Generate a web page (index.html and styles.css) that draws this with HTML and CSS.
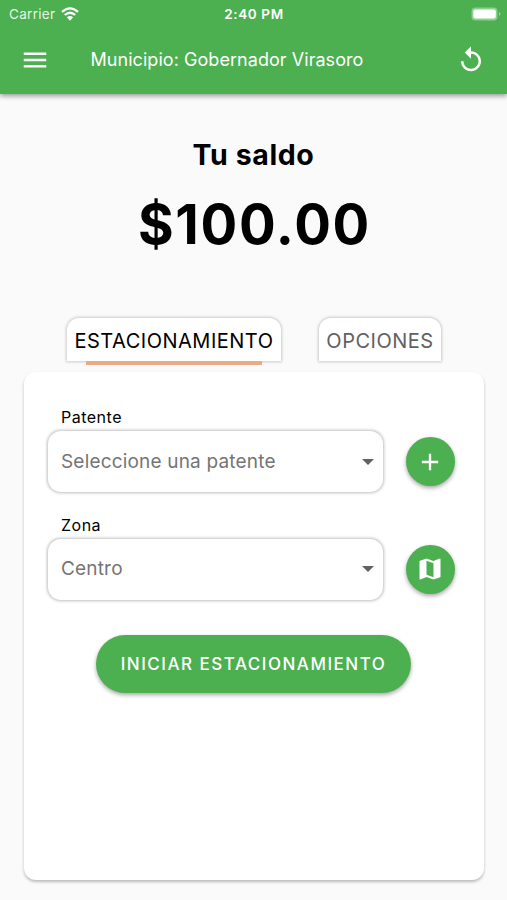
FILE: index.html
```html
<!DOCTYPE html>
<html lang="es">
<head>
<meta charset="utf-8">
<title>Estacionamiento</title>
<link rel="stylesheet" href="styles.css">
</head>
<body>
<header class="appbar">
  <div class="status">
    <div class="carrier"><span>Carrier</span>
      <svg class="wifi" viewBox="0 0 18 14"><path d="M1 4.9Q9-2.1 17 4.9M3.8 8Q9 3.500 14.200 8" fill="none" stroke="#fff" stroke-width="2.300"/><path d="M5.900 10.200Q9 7.700 12.100 10.200L9 13.700z" fill="#fff"/></svg>
    </div>
    <div class="clock">2:40 PM</div>
    <svg class="battery" viewBox="0 0 30 14"><rect x=".5" y=".5" width="26" height="13" rx="4" fill="#fff" fill-opacity=".38"/><rect x="2.300" y="2.500" width="22.500" height="9" rx="2" fill="#fff"/><path d="M28 5q3 2 0 4z" fill="#fff" fill-opacity=".45"/></svg>
  </div>
  <div class="toolbar">
    <svg class="icon" viewBox="0 0 24 24"><path d="M3 18h18v-2H3v2zm0-5h18v-2H3v2zm0-7v2h18V6H3z"/></svg>
    <h1 class="title">Municipio: Gobernador Virasoro</h1>
    <svg class="icon" viewBox="0 0 24 24"><path d="M12 5V1L7 6l5 5V7c3.310 0 6 2.690 6 6s-2.690 6-6 6-6-2.690-6-6H4c0 4.420 3.580 8 8 8s8-3.580 8-8-3.580-8-8-8z"/></svg>
  </div>
</header>

<section class="balance">
  <h2 class="balance-label">Tu saldo</h2>
  <div class="balance-amount">$100.00</div>
</section>

<nav class="tabs">
  <div class="tab tab-active">ESTACIONAMIENTO</div>
  <div class="tab">OPCIONES</div>
</nav>

<main class="card">
  <div class="label">Patente</div>
  <div class="row">
    <div class="select"><span>Seleccione una patente</span><i class="arrow"></i></div>
    <div class="fab"><svg class="fab-icon" viewBox="0 0 24 24"><path d="M19 13h-6v6h-2v-6H5v-2h6V5h2v6h6v2z"/></svg></div>
  </div>
  <div class="label">Zona</div>
  <div class="row">
    <div class="select"><span>Centro</span><i class="arrow"></i></div>
    <div class="fab"><svg class="fab-icon" viewBox="0 0 24 24"><path d="M20.500 3l-.16.030L15 5.100 9 3 3.360 4.900c-.21.070-.36.250-.36.480V20.500c0 .28.220.5.500.5l.16-.03L9 18.900l6 2.100 5.640-1.900c.21-.07.360-.25.360-.48V3.500c0-.28-.22-.5-.5-.5zM15 19l-6-2.110V5l6 2.110V19z"/></svg></div>
  </div>
  <div class="button">INICIAR ESTACIONAMIENTO</div>
</main>
</body>
</html>
```
FILE: styles.css
```css
body {
  margin: 0;
  height: 900px;
  overflow: hidden;
  background: #fafafa;
  color: #000;
  font-family: Inter, "Liberation Sans", sans-serif;
}

/* Header */

.appbar {
  height: 94px;
  background: #4caf50;
  color: #fff;
  box-shadow: 0 2px 5px rgba(0, 0, 0, .4);
}

.status {
  display: grid;
  grid-template-columns: 1fr auto 1fr;
  align-items: center;
  height: 27px;
  padding: 0 8px 0 9px;
  font-size: 13.5px;
}

.carrier {
  display: flex;
  align-items: center;
  gap: 6px;
  color: #e6f5e6;
  letter-spacing: .3px;
}

.wifi {
  width: 18px;
  height: 14px;
}

.clock {
  font-weight: 600;
  letter-spacing: .6px;
}

.battery {
  justify-self: end;
  width: 30px;
  height: 14px;
  margin-right: -2px;
}

.toolbar {
  display: flex;
  align-items: center;
  height: 65px;
  padding: 0 21px 0 20px;
}

.icon {
  width: 30px;
  height: 30px;
  fill: #fff;
}

.title {
  flex: 1;
  margin: 0 0 1px 40.5px;
  font-size: 18px;
  font-weight: 400;
  letter-spacing: .05px;
}

/* Balance */

.balance {
  height: 224px;
  text-align: center;
}

.balance-label {
  margin: 0;
  padding-top: 42px;
  font-size: 28.5px;
  line-height: 37px;
  font-weight: 700;
  letter-spacing: .6px;
}

.balance-amount {
  padding: 18px 0 0 2px;
  font-size: 54.5px;
  line-height: 66px;
  font-weight: 700;
  letter-spacing: 1.7px;
}

/* Tabs */

.tabs {
  display: flex;
  gap: 38px;
  height: 54px;
  padding-left: 67px;
}

.tab {
  position: relative;
  box-sizing: border-box;
  width: 122px;
  height: 43px;
  border-radius: 12px 12px 0 0;
  background: #fff;
  box-shadow: 0 0 3px 1px rgba(0, 0, 0, .19);
  color: #616161;
  font-size: 20px;
  line-height: 46px;
  letter-spacing: .5px;
  text-align: center;
  white-space: nowrap;
}

.tab-active {
  width: 214px;
  color: #000;
}

.tab-active::after {
  content: "";
  position: absolute;
  left: 19px;
  right: 19px;
  bottom: -4px;
  height: 4px;
  background: #e9aa87;
}

/* Form */

.card {
  box-sizing: border-box;
  height: 508px;
  margin: 0 23px 0 24px;
  padding: 35px 29.5px 0 23.5px;
  border-radius: 12px;
  background: #fff;
  box-shadow: 0 2px 3px rgba(0, 0, 0, .25);
}

.label {
  padding-left: 13.5px;
  height: 24px;
  font-size: 16px;
  line-height: 21px;
  letter-spacing: .5px;
}

.row {
  display: flex;
  align-items: center;
  justify-content: space-between;
  height: 61px;
  margin-bottom: 22.5px;
}

.select {
  display: flex;
  align-items: center;
  justify-content: space-between;
  box-sizing: border-box;
  width: 335px;
  height: 61px;
  padding: 0 9px 0 13.5px;
  border-radius: 13px;
  box-shadow: 0 0 3px .5px rgba(0, 0, 0, .25);
  color: #757575;
  font-size: 19px;
  line-height: 24px;
  letter-spacing: .18px;
}

.arrow {
  border: 6px solid transparent;
  border-top-color: #616161;
  border-bottom: 0;
}

.fab {
  display: flex;
  align-items: center;
  justify-content: center;
  width: 49px;
  height: 49px;
  border-radius: 50%;
  background: #4caf50;
  box-shadow: 0 2px 4px rgba(0, 0, 0, .35);
}

.fab-icon {
  width: 28px;
  height: 28px;
  fill: #fff;
}

.button {
  width: 315px;
  height: 58px;
  margin: 35px 0 0 48.5px;
  border-radius: 29px;
  background: #4caf50;
  box-shadow: 0 2px 4px rgba(0, 0, 0, .35);
  color: #fff;
  font-size: 17px;
  font-weight: 500;
  line-height: 59px;
  letter-spacing: 1.5px;
  text-align: center;
}
```
